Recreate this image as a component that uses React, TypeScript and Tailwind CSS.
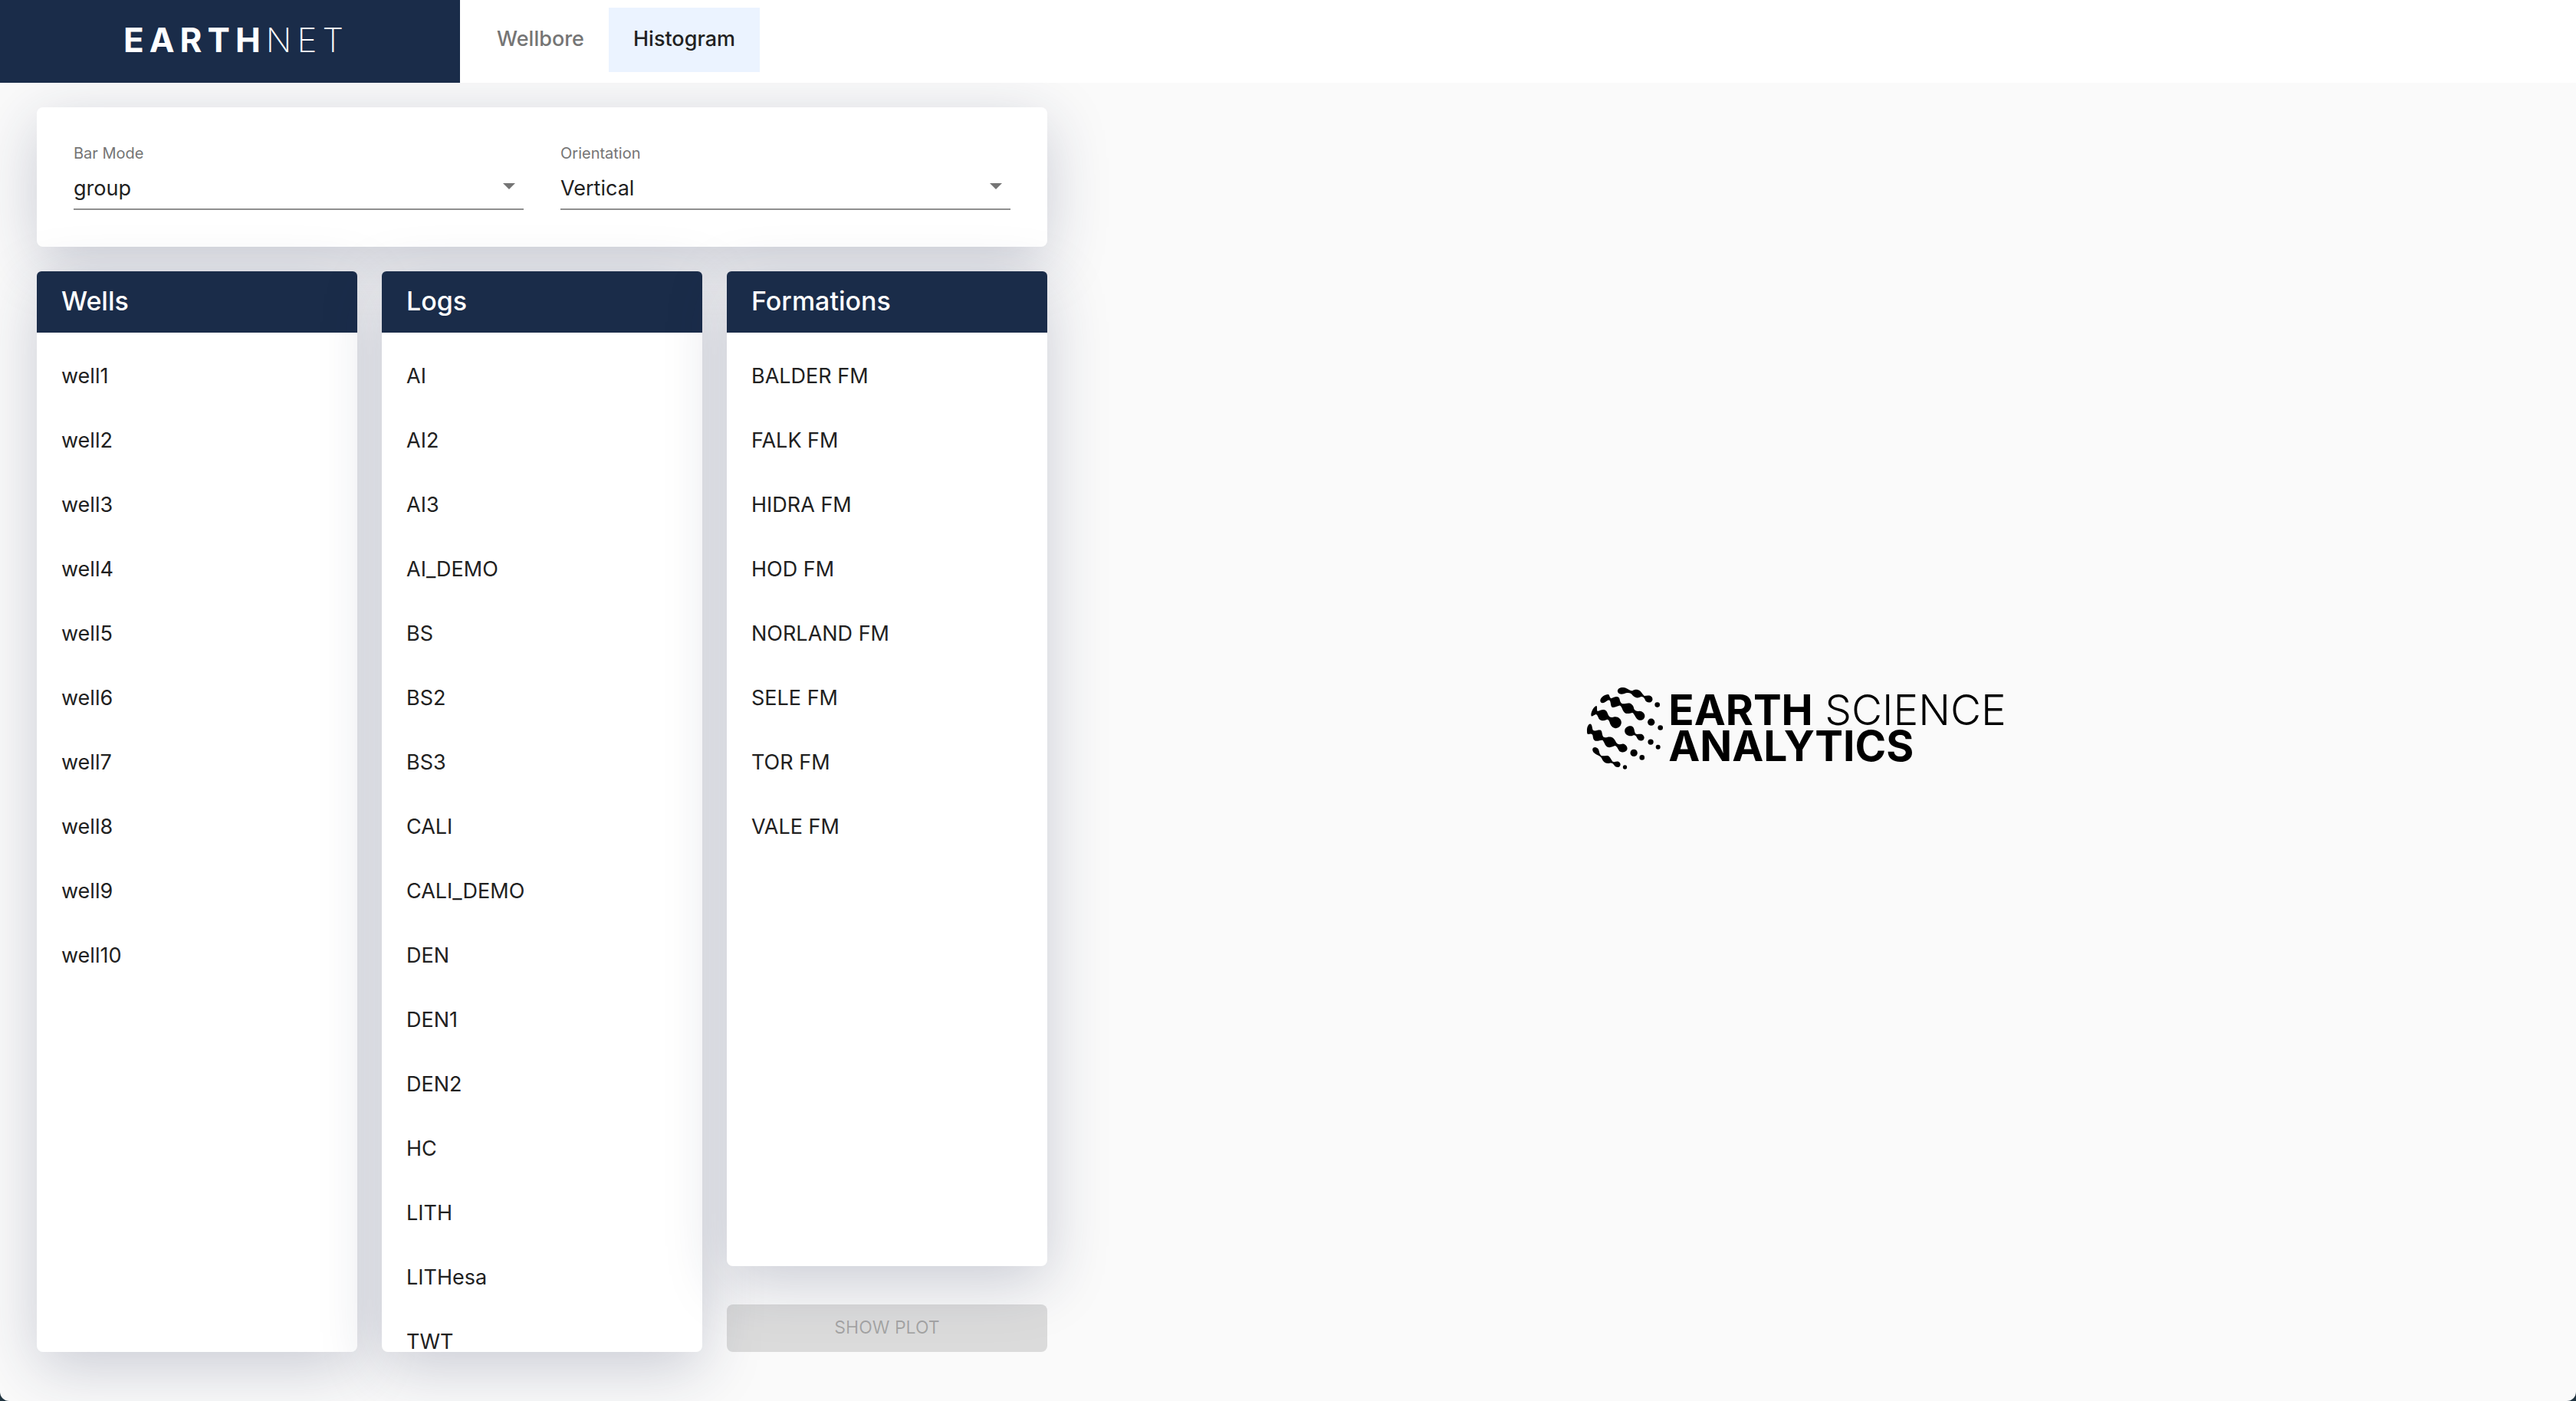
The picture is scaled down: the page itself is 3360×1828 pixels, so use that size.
import { useState } from "react";

const wells = ["well1", "well2", "well3", "well4", "well5", "well6", "well7", "well8", "well9", "well10"];
const logs = [
  "AI", "AI2", "AI3", "AI_DEMO", "BS", "BS2", "BS3", "CALI",
  "CALI_DEMO", "DEN", "DEN1", "DEN2", "HC", "LITH", "LITHesa", "TWT",
];
const formations = [
  "BALDER FM", "FALK FM", "HIDRA FM", "HOD FM", "NORLAND FM", "SELE FM", "TOR FM", "VALE FM",
];

const cardShadow = "shadow-[0_20px_80px_rgba(30,40,80,0.22)]";

function SelectField({ id, label, options }: { id: string; label: string; options: string[] }) {
  const [value, setValue] = useState(options[0]);
  return (
    <div className="flex min-w-0 flex-1 flex-col">
      <label htmlFor={id} className="text-[20px] leading-6 text-[#757575]">{label}</label>
      <div className="relative mt-2">
        <select
          id={id}
          value={value}
          onChange={(e) => setValue(e.target.value)}
          className="block h-[54px] w-full appearance-none border-b-2 border-[#8f8f8f] bg-transparent text-[27px] text-[#212121] outline-none"
        >
          {options.map((o) => (
            <option key={o}>{o}</option>
          ))}
        </select>
        <svg viewBox="0 0 16 8" className="pointer-events-none absolute right-[11px] top-[19px] h-2 w-4 fill-[#757575]" aria-hidden="true">
          <path d="M0 0h16L8 8z" />
        </svg>
      </div>
    </div>
  );
}

function ListCard({ title, items }: { title: string; items: string[] }) {
  return (
    <section className={`flex min-h-0 flex-1 flex-col rounded-lg bg-white ${cardShadow}`}>
      <h2 className="flex h-20 shrink-0 items-center rounded-t-md bg-[#1a2c49] px-8 pb-1 text-[34px] font-medium text-white">
        {title}
      </h2>
      <ul className="min-h-0 flex-1 overflow-y-auto py-4 [scrollbar-width:none]">
        {items.map((item) => (
          <li key={item}>
            <button type="button" className="flex h-[84px] w-full items-center px-8 pb-0.5 text-left text-[27px] text-[#212121]">
              {item}
            </button>
          </li>
        ))}
      </ul>
    </section>
  );
}

function GlobeMark() {
  return (
    <svg viewBox="54 48 304 328" className="h-[109px] w-[101px] shrink-0" aria-hidden="true">
      <path d="M177 66C176 56 188 50 200 51C214 52 222 64 236 64C241 60 250 58 258 61C270 64 272 76 282 84C290 83 299 81 306 84C317 89 317 104 307 109C297 112 287 108 284 97C280 89 273 86 268 88C258 94 244 92 236 82C230 72 220 70 210 73C196 80 178 78 177 66Z" />
      <path d="M109 102C110 90 126 78 140 78C147 80 144 90 152 94C162 90 172 84 181 89C188 97 184 106 194 114C202 118 212 111 224 113C236 117 240 126 242 136C246 142 252 145 260 144C272 142 284 152 284 163C283 176 272 182 260 179C248 174 246 158 236 150C226 152 214 157 205 150C195 142 196 128 186 122C178 122 168 132 156 129C148 122 152 110 146 102C138 96 130 112 118 112C112 111 109 107 109 102Z" />
      <path d="M73 157C74 143 84 126 94 123C99 127 94 136 98 144C106 142 113 138 120 138C132 138 136 146 140 158C146 170 152 170 162 167C176 162 192 174 192 188C192 202 180 212 168 211C156 209 149 200 146 188C143 178 138 174 132 178C124 184 110 182 104 174C100 166 98 158 92 156C84 158 78 166 74 163C73 161 73 159 73 157Z" />
      <path d="M57 222C56 208 62 194 70 194C77 196 77 208 80 218C88 225 100 216 111 219C118 224 114 236 122 246C132 250 140 242 152 246C164 250 168 260 172 268C180 278 188 274 198 272C210 274 217 284 215 294C210 306 194 309 184 301C177 292 176 284 168 280C158 282 148 290 136 284C126 278 126 266 118 258C110 256 100 264 88 260C78 252 82 242 78 236C72 230 66 236 59 234C57 230 57 226 57 222Z" />
      <path d="M79 292C82 283 96 284 102 294C106 302 104 310 112 318C120 322 132 316 142 320C150 326 152 336 158 342C166 346 172 340 180 342C190 346 191 358 183 363C175 366 166 362 163 355C158 348 152 346 146 348C136 352 124 346 118 336C114 326 110 322 102 318C90 314 76 304 79 292Z" />
      <path d="M205 221C206 207 222 199 234 204C244 210 242 222 246 230C252 238 260 232 270 234C282 238 285 250 278 257C270 263 258 259 254 250C250 240 244 236 238 239C226 246 204 238 205 221Z" />
      <circle cx="333" cy="119" r="10" />
      <circle cx="309" cy="187" r="14" />
      <circle cx="345" cy="209" r="10" />
      <circle cx="307" cy="265" r="11" />
      <circle cx="336" cy="285" r="9" />
      <circle cx="241" cy="308" r="14" />
      <circle cx="273" cy="326" r="10" />
      <circle cx="206" cy="364" r="8" />
    </svg>
  );
}

export default function App() {
  return (
    <div className="h-screen bg-[#203440] font-['Inter',sans-serif]">
      <div className="flex h-full flex-col overflow-hidden rounded-b-xl bg-[#fafafa]">
        <header className="relative z-10 flex h-[108px] shrink-0 bg-white">
          <h1 className="flex w-[600px] items-center justify-center bg-[#1a2c49] pb-1 pl-4 text-[44px] tracking-[7px] text-white">
            <span className="font-bold">EARTH</span>
            <span className="font-extralight">NET</span>
          </h1>
          <nav className="flex items-start pl-4 pt-[10px] text-[27px] font-medium">
            <a href="#wellbore" className="flex h-[84px] items-center px-8 pb-0.5 text-[#757575]">Wellbore</a>
            <a href="#histogram" aria-current="page" className="flex h-[84px] items-center bg-[#ebf3ff] px-8 pb-0.5 text-[#212121]">Histogram</a>
          </nav>
        </header>
        <main className="flex min-h-0 flex-1 pb-16 pt-8">
          <div className="flex w-5/12 flex-col gap-8 pl-12 pr-[34px]">
            <div className={`flex gap-12 rounded-lg bg-white p-12 ${cardShadow}`}>
              <SelectField id="bar-mode" label="Bar Mode" options={["group", "stack", "overlay"]} />
              <SelectField id="orientation" label="Orientation" options={["Vertical", "Horizontal"]} />
            </div>
            <div className="grid min-h-0 flex-1 grid-cols-3 grid-rows-1 gap-8">
              <div className="flex min-h-0 flex-col"><ListCard title="Wells" items={wells} /></div>
              <div className="flex min-h-0 flex-col"><ListCard title="Logs" items={logs} /></div>
              <div className="flex min-h-0 flex-col">
                <ListCard title="Formations" items={formations} />
                <button type="button" disabled className="mt-[50px] h-[62px] shrink-0 rounded-lg bg-black/12 pb-0.5 text-[23px] text-black/26">
                  SHOW PLOT
                </button>
              </div>
            </div>
          </div>
          <div className="flex flex-1 items-center justify-center pb-1 pr-[74px] text-black">
            <GlobeMark />
            <p className="ml-1.5 text-[55px] leading-[47px]">
              <span className="font-bold">EARTH</span> <span className="font-light">SCIENCE</span>
              <br />
              <span className="font-bold">ANALYTICS</span>
            </p>
          </div>
        </main>
      </div>
    </div>
  );
}
